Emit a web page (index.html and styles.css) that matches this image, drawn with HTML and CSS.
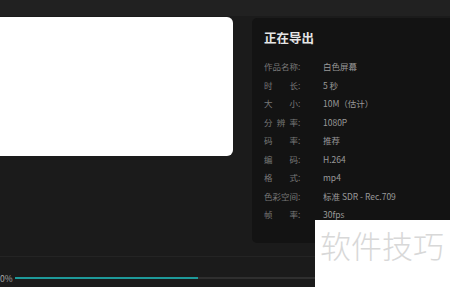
FILE: index.html
```html
<!DOCTYPE html>
<html lang="zh">
<head>
<meta charset="utf-8">
<link rel="stylesheet" href="styles.css">
</head>
<body>
<div class="app">
  <div class="topbar"></div>
  <div class="main">
    <div class="preview"></div>
    <div class="panel">
      <div class="title">正在导出</div>
      <div class="rows">
        <div class="row"><span class="label"><span class="chars">作品名称</span>:</span><span class="value">白色屏幕</span></div>
        <div class="row"><span class="label"><span class="chars">时 长</span>:</span><span class="value">5 秒</span></div>
        <div class="row"><span class="label"><span class="chars">大 小</span>:</span><span class="value">10M（估计）</span></div>
        <div class="row"><span class="label"><span class="chars">分 辨 率</span>:</span><span class="value">1080P</span></div>
        <div class="row"><span class="label"><span class="chars">码 率</span>:</span><span class="value">推荐</span></div>
        <div class="row"><span class="label"><span class="chars">编 码</span>:</span><span class="value">H.264</span></div>
        <div class="row"><span class="label"><span class="chars">格 式</span>:</span><span class="value">mp4</span></div>
        <div class="row"><span class="label"><span class="chars">色彩空间</span>:</span><span class="value">标准 SDR - Rec.709</span></div>
        <div class="row"><span class="label"><span class="chars">帧 率</span>:</span><span class="value">30fps</span></div>
      </div>
    </div>
  </div>
  <div class="footer">
    <span class="pct">0%</span>
    <div class="track"><div class="fill" style="width:42.5%"></div></div>
  </div>
  <div class="watermark">软件技巧</div>
</div>
</body>
</html>
```
FILE: styles.css
```css
* { box-sizing: border-box; }
html, body { margin: 0; padding: 0; }
body {
  width: 450px;
  height: 287px;
  overflow: hidden;
  background: #1b1b1b;
  font-family: "Noto Sans CJK SC", "Noto Sans", sans-serif;
}
.app {
  position: relative;
  width: 450px;
  height: 287px;
  display: flex;
  flex-direction: column;
}
.topbar {
  height: 16px;
  background: #212121;
  flex: none;
}
.main {
  display: flex;
  align-items: flex-start;
  padding-top: 1px;
  flex: none;
}
.preview {
  flex: none;
  width: 253px;
  height: 139px;
  margin-left: -20px;
  background: #ffffff;
  border-radius: 6px;
}
.panel {
  flex: none;
  width: 220px;
  height: 225px;
  margin-left: 19px;
  margin-top: 1px;
  background: #131313;
  border-radius: 5px;
  padding: 11px 0 0 12px;
}
.title {
  font-size: 12.5px;
  font-weight: 700;
  color: #e6e6e6;
  line-height: 18px;
}
.rows {
  margin-top: 10px;
}
.row {
  display: flex;
  align-items: center;
  height: 18.5px;
  font-size: 8.5px;
}
.label {
  display: flex;
  width: 37px;
  color: #787878;
  flex: none;
}
.chars {
  width: 34px;
  text-align: justify;
  text-align-last: justify;
}
.value {
  margin-left: 22px;
  color: #999999;
  white-space: nowrap;
}
.footer {
  margin-top: 13px;
  border-top: 1px solid #242424;
  flex: 1;
  display: flex;
  align-items: flex-start;
  padding-top: 16px;
}
.pct {
  font-size: 8.5px;
  color: #a8a8a8;
  line-height: 10px;
  width: 15px;
  flex: none;
}
.track {
  margin-top: 4px;
  width: 430px;
  height: 2px;
  background: #2f2f2f;
}
.fill {
  height: 100%;
  background: #1e9a9a;
}
.watermark {
  position: absolute;
  left: 315px;
  top: 220px;
  width: 135px;
  height: 67px;
  background: #ffffff;
  color: #d8d8d8;
  font-size: 31px;
  font-weight: 300;
  line-height: 36px;
  padding: 7px 0 0 5px;
  white-space: nowrap;
}
```
